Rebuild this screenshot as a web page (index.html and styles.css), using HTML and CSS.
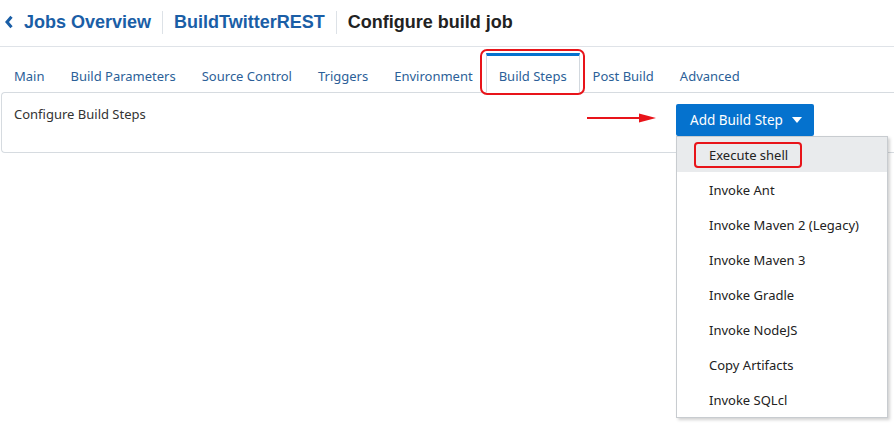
FILE: index.html
```html
<!DOCTYPE html>
<html>
<head>
<meta charset="utf-8">
<link rel="stylesheet" href="styles.css">
</head>
<body>
<div class="header">
  <a class="crumb back"><svg class="chev" width="10" height="14" viewBox="0 0 10 14"><path d="M7.5 1.8 L3 7 L7.5 12.2" fill="none" stroke="#1a5ea6" stroke-width="3"/></svg>Jobs Overview</a>
  <span class="sep"></span>
  <a class="crumb">BuildTwitterREST</a>
  <span class="sep"></span>
  <span class="title">Configure build job</span>
</div>
<div class="tabs">
  <span class="tab">Main</span>
  <span class="tab">Build Parameters</span>
  <span class="tab">Source Control</span>
  <span class="tab">Triggers</span>
  <span class="tab">Environment</span>
  <span class="tab active">Build Steps</span>
  <span class="tab">Post Build</span>
  <span class="tab">Advanced</span>
</div>
<div class="panel">
  <span class="panel-text">Configure Build Steps</span>
  <svg class="arrow" width="70" height="12" viewBox="0 0 70 12"><line x1="0" y1="6" x2="54" y2="6" stroke="#e8141a" stroke-width="2"/><path d="M52 1.5 L69 6 L52 10.5 Z" fill="#e8141a"/></svg>
  <div class="dd">
    <button class="btn">Add Build Step<span class="caret"></span></button>
    <ul class="menu">
      <li class="hl"><span class="mark">Execute shell</span></li>
      <li>Invoke Ant</li>
      <li>Invoke Maven 2 (Legacy)</li>
      <li>Invoke Maven 3</li>
      <li>Invoke Gradle</li>
      <li>Invoke NodeJS</li>
      <li>Copy Artifacts</li>
      <li>Invoke SQLcl</li>
    </ul>
  </div>
</div>
</body>
</html>
```
FILE: styles.css
```css
html, body { margin: 0; padding: 0; background: #fff; }
body { min-height: 425px; font-family: "Noto Sans", "Open Sans", sans-serif; font-size: 13px; color: #333; }

.header {
  display: flex;
  align-items: center;
  height: 47px;
  border-bottom: 1px solid #dfe3e8;
  padding: 0 0 2px 4px;
  box-sizing: border-box;
}
.crumb, .title {
  font-family: "Liberation Sans", Arial, sans-serif;
  font-weight: bold;
  font-size: 18px;
  line-height: 28px;
  color: #1a5ea6;
}
.title { color: #222; }
.back { display: flex; align-items: center; }
.chev { margin-right: 10px; }
.sep { width: 1px; height: 23px; background: #dde2e7; margin: 0 11px; }

.tabs {
  display: flex;
  align-items: stretch;
  height: 45px;
  padding: 6px 0 0 1px;
  box-sizing: border-box;
}
.tab {
  position: relative;
  display: flex;
  align-items: center;
  padding: 4px 13px 0;
  color: #2c5f98;
  font-size: 13px;
  border-top: 3px solid transparent;
}
.tab.active {
  padding: 4px 12px 0;
  border: 1px solid #d2d8de;
  border-top: 3px solid #0572ce;
  border-bottom-color: #fff;
  background: #fff;
  margin-bottom: -1px;
  z-index: 2;
}
.tab.active::after {
  content: "";
  position: absolute;
  left: -7px; right: -6px; top: -7px; bottom: -3px;
  border: 2px solid #e8141a;
  border-radius: 7px;
}

.panel {
  display: flex;
  align-items: flex-start;
  height: 61px;
  margin-left: 1px;
  border: 1px solid #d6dbe0;
  border-right: none;
  border-radius: 4px 0 0 4px;
  padding: 10px 0 0 12px;
  box-sizing: border-box;
  position: relative;
  z-index: 1;
}
.panel-text { line-height: 22px; font-size: 13px; }
.arrow { margin: 9px 19px 0 auto; }
.dd { position: relative; margin-right: 80px; margin-top: 1px; }
.btn {
  display: flex;
  align-items: center;
  height: 32px;
  width: 138px;
  padding: 0 0 0 14px;
  border: none;
  border-radius: 2px;
  background: #0572ce;
  color: #fff;
  font-family: inherit;
  font-size: 13.5px;
}
.caret {
  width: 0; height: 0;
  border-left: 5px solid transparent;
  border-right: 5px solid transparent;
  border-top: 6px solid #fff;
  margin-left: 9px;
}
.menu {
  position: absolute;
  top: 32px;
  left: 0;
  width: 212px;
  margin: 0;
  padding: 0;
  list-style: none;
  background: #fff;
  border: 1px solid #c8ccd0;
  box-shadow: 2px 2px 3px rgba(0,0,0,0.18);
  box-sizing: border-box;
}
.menu li {
  height: 35px;
  display: flex;
  align-items: center;
  padding-left: 32px;
  color: #222;
  font-size: 13px;
}
.menu li.hl { background: #e9ebed; }
.mark { position: relative; }
.mark::after {
  content: "";
  position: absolute;
  left: -15px; right: -14px; top: -4px; bottom: -4px;
  border: 2px solid #e8141a;
  border-radius: 4px;
}
```
